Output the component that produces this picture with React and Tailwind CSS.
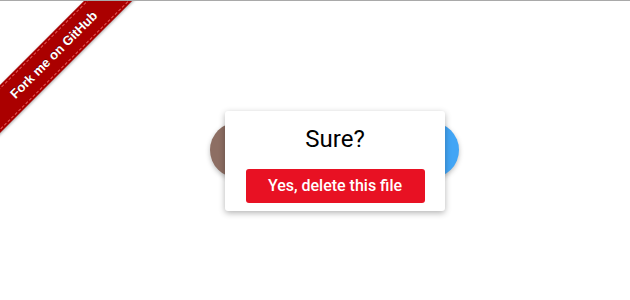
export default function App() {
  return (
    <div className="relative h-[300px] w-full overflow-hidden border-t border-[#a9a9a9] bg-white font-['Roboto',sans-serif]">
      {/* fork ribbon */}
      <div className="absolute left-0 top-0 h-[150px] w-[150px] overflow-hidden">
        <div className="absolute left-[-46px] top-[37px] w-[200px] -rotate-45 bg-[#a00] py-[2px] shadow-[0_1px_3px_rgba(0,0,0,0.35)]">
          <div className="border-y border-dashed border-[#ff8080]/70 py-[6px] text-center font-['Liberation_Sans',sans-serif] text-[13px] font-bold leading-[16px] text-white [text-shadow:0_-1px_rgba(0,0,0,0.4)]">
            Fork me on GitHub
          </div>
        </div>
      </div>

      <div className="flex pl-[210px] pt-[121px]">
        <div className="relative flex gap-[137px]">
          <div className="h-14 w-14 rounded-full bg-[#8d6e63] shadow-[0_2px_5px_rgba(0,0,0,0.26)]" />
          <div className="h-14 w-14 rounded-full bg-[#42a5f5] shadow-[0_2px_5px_rgba(0,0,0,0.26)]" />

          <div className="absolute left-[15px] top-[-11px] flex h-[100px] w-[220px] flex-col items-center rounded-[3px] bg-white px-5 pt-[13px] shadow-[0_2px_6px_rgba(0,0,0,0.3)]">
            <div className="text-[24px] leading-[30px] text-black">Sure?</div>
            <button className="mt-[15px] h-[34px] w-[179px] rounded-[3px] bg-[#e81123] text-[16px] font-medium text-white">
              Yes, delete this file
            </button>
          </div>
        </div>
      </div>
    </div>
  )
}
